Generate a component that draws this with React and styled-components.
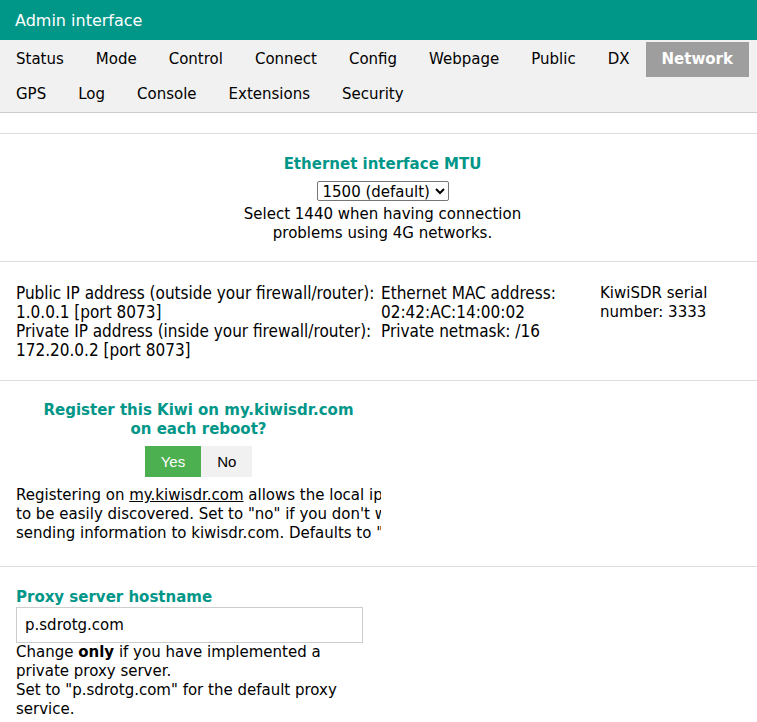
import React from 'react'
import styled, { createGlobalStyle } from 'styled-components'

const GlobalStyle = createGlobalStyle`
  html, body {
    margin: 0;
    padding: 0;
    background: #fff;
  }
  body {
    font-family: "DejaVu Sans", Verdana, sans-serif;
    font-size: 15px;
    line-height: 19px;
    color: #000;
  }
`

const teal = '#009688'

const Header = styled.div`
  height: 40px;
  background: ${teal};
  color: #fff;
  font-size: 16px;
  display: flex;
  align-items: center;
  padding-left: 15px;
`

const TabBar = styled.div`
  display: flex;
  flex-wrap: wrap;
  background: #f1f1f1;
  border-bottom: 1px solid #ccc;
  padding-top: 2px;
`

const Tab = styled.div`
  padding: 8px 16px;
  line-height: 19px;
  white-space: nowrap;
  color: ${({ active }) => (active ? '#fff' : '#000')};
  background: ${({ active }) => (active ? '#9e9e9e' : 'transparent')};
  font-weight: ${({ active }) => (active ? 'bold' : 'normal')};
`

const Spacer = styled.div`
  height: 20px;
`

const Section = styled.div`
  border-top: 1px solid #ddd;
  padding: ${({ pad }) => pad || '20px 16px'};
`

const Centered = styled.div`
  display: flex;
  flex-direction: column;
  align-items: center;
  text-align: center;
`

const Heading = styled.div`
  color: ${teal};
  font-weight: bold;
`

const Select = styled.select`
  font-family: "DejaVu Sans", Verdana, sans-serif;
  font-size: 15px;
  height: 20px;
  margin-top: 7px;
  margin-bottom: 4px;
  padding: 0 1px;
  border: 1px solid #767676;
  border-radius: 2px;
  background: #fff;
  color: #000;
`

const InfoGrid = styled.div`
  display: grid;
  grid-template-columns: 365px 219px 1fr;
`

const InfoCol = styled.div`
  font-family: ${({ condensed }) =>
    condensed ? '"DejaVu Sans Condensed", "DejaVu Sans", sans-serif' : '"DejaVu Sans", sans-serif'};
  font-size: ${({ condensed }) => (condensed ? '17px' : '15px')};
  padding-right: ${({ condensed }) => (condensed ? '0' : '16px')};
`

const HalfCol = styled.div`
  width: 365px;
  overflow: hidden;
`

const ButtonGroup = styled.div`
  display: flex;
  margin-top: 7px;
`

const ToggleBtn = styled.div`
  font-family: "Liberation Sans", Arial, sans-serif;
  font-size: 15px;
  line-height: 17px;
  padding: 7px 16px;
  color: ${({ on }) => (on ? '#fff' : '#000')};
  background: ${({ on }) => (on ? '#4caf50' : '#f1f1f1')};
`

const NoWrapText = styled.div`
  white-space: nowrap;
  margin-top: 9px;
`

const Link = styled.span`
  text-decoration: underline;
`

const ProxyCol = styled.div`
  width: 347px;
`

const TextInput = styled.input`
  box-sizing: border-box;
  display: block;
  width: 347px;
  height: 36px;
  padding: 8px;
  border: 1px solid #ccc;
  font-family: "DejaVu Sans", Verdana, sans-serif;
  font-size: 15px;
  color: #000;
  outline: none;
`

const tabs = [
  'Status', 'Mode', 'Control', 'Connect', 'Config', 'Webpage', 'Public', 'DX', 'Network',
  'GPS', 'Log', 'Console', 'Extensions', 'Security',
]

export default function App() {
  return (
    <>
      <GlobalStyle />
      <Header>Admin interface</Header>
      <TabBar>
        {tabs.map((t) => (
          <Tab key={t} active={t === 'Network'}>{t}</Tab>
        ))}
      </TabBar>
      <Spacer />

      <Section pad="21px 12px 18px 20px">
        <Centered>
          <Heading>Ethernet interface MTU</Heading>
          <Select defaultValue="1500">
            <option value="1500">1500 (default)</option>
            <option value="1440">1440</option>
          </Select>
          <div>
            Select 1440 when having connection<br />
            problems using 4G networks.
          </div>
        </Centered>
      </Section>

      <Section pad="22px 16px 20px">
        <InfoGrid>
          <InfoCol condensed>
            Public IP address (outside your firewall/router):<br />
            1.0.0.1 [port 8073]<br />
            Private IP address (inside your firewall/router):<br />
            172.20.0.2 [port 8073]
          </InfoCol>
          <InfoCol condensed>
            Ethernet MAC address:<br />
            02:42:AC:14:00:02<br />
            Private netmask: /16
          </InfoCol>
          <InfoCol>KiwiSDR serial number: 3333</InfoCol>
        </InfoGrid>
      </Section>

      <Section pad="20px 16px 23px">
        <HalfCol>
          <Centered>
            <Heading>
              Register this Kiwi on my.kiwisdr.com<br />
              on each reboot?
            </Heading>
            <ButtonGroup>
              <ToggleBtn on>Yes</ToggleBtn>
              <ToggleBtn>No</ToggleBtn>
            </ButtonGroup>
          </Centered>
          <NoWrapText>
            Registering on <Link>my.kiwisdr.com</Link> allows the local ip address of your Kiwi<br />
            to be easily discovered. Set to "no" if you don't want your Kiwi<br />
            sending information to kiwisdr.com. Defaults to "yes".
          </NoWrapText>
        </HalfCol>
      </Section>

      <Section pad="21px 16px 12px">
        <ProxyCol>
          <Heading>Proxy server hostname</Heading>
          <TextInput defaultValue="p.sdrotg.com" />
          <div>
            Change <b>only</b> if you have implemented a private proxy server.<br />
            Set to "p.sdrotg.com" for the default proxy service.
          </div>
        </ProxyCol>
      </Section>
    </>
  )
}
